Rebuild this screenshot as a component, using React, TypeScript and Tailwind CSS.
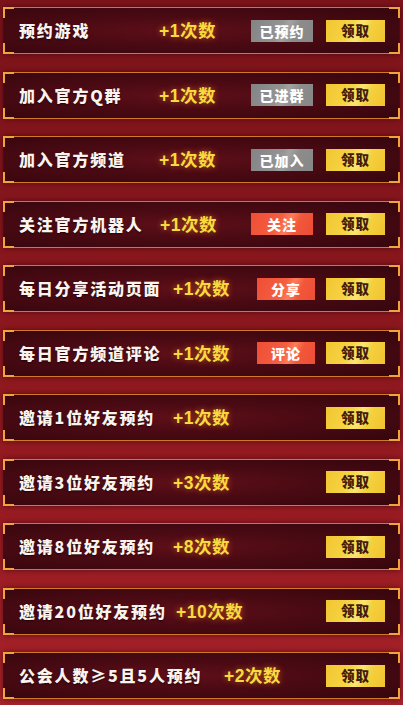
import React from "react";

type Row = {
  label: string;
  labelW: string;
  value: string;
  status?: { text: string; kind: "gray" | "red"; w: string };
};

const rows: Row[] = [
  { label: "预约游戏", labelW: "w-[140px]", value: "+1次数", status: { text: "已预约", kind: "gray", w: "w-[62px] mr-[13px]" } },
  { label: "加入官方Q群", labelW: "w-[140px]", value: "+1次数", status: { text: "已进群", kind: "gray", w: "w-[62px] mr-[13px]" } },
  { label: "加入官方频道", labelW: "w-[140px]", value: "+1次数", status: { text: "已加入", kind: "gray", w: "w-[62px] mr-[13px]" } },
  { label: "关注官方机器人", labelW: "w-[141px]", value: "+1次数", status: { text: "关注", kind: "red", w: "w-[62px] mr-[13px]" } },
  { label: "每日分享活动页面", labelW: "w-[154px]", value: "+1次数", status: { text: "分享", kind: "red", w: "w-[58px] mr-[11px]" } },
  { label: "每日官方频道评论", labelW: "w-[154px]", value: "+1次数", status: { text: "评论", kind: "red", w: "w-[58px] mr-[11px]" } },
  { label: "邀请1位好友预约", labelW: "w-[154px]", value: "+1次数" },
  { label: "邀请3位好友预约", labelW: "w-[154px]", value: "+3次数" },
  { label: "邀请8位好友预约", labelW: "w-[154px]", value: "+8次数" },
  { label: "邀请20位好友预约", labelW: "w-[157px]", value: "+10次数" },
  { label: "公会人数≥5且5人预约", labelW: "w-[205px]", value: "+2次数" },
];

function Corners() {
  return (
    <>
      <span className="absolute left-[-1px] top-[-1px] h-[11px] w-[11px] border-l-2 border-t-2 border-[#f0a53c]" />
      <span className="absolute right-[-1px] top-[-1px] h-[11px] w-[11px] border-r-2 border-t-2 border-[#f0a53c]" />
      <span className="absolute left-[-1px] bottom-[-1px] h-[11px] w-[11px] border-l-2 border-b-2 border-[#f0a53c]" />
      <span className="absolute right-[-1px] bottom-[-1px] h-[11px] w-[11px] border-r-2 border-b-2 border-[#f0a53c]" />
    </>
  );
}

function TaskRow({ row }: { row: Row }) {
  return (
    <div className="relative flex h-[47px] items-center border-y border-x border-y-[#d2782c] border-x-[#4a0c12] bg-[radial-gradient(ellipse_at_45%_50%,#5e0f19_0%,#4a0a13_45%,#36060d_100%)] pl-[15px] pr-[14px] shadow-[0_0_6px_rgba(40,0,5,0.6)]">
      <Corners />
      <div className="flex items-baseline">
        <div
          className={`${row.labelW} shrink-0 whitespace-nowrap text-[16px] font-black leading-[20px] tracking-[1.8px] text-[#fbf3ee] [text-shadow:0_1px_2px_rgba(0,0,0,0.6)]`}
        >
          {row.label}
        </div>
        <div className="whitespace-nowrap font-['Liberation_Sans','Noto_Sans_CJK_SC',sans-serif] text-[17.5px] font-bold leading-[20px] tracking-[0.5px] text-[#f8da3e] [text-shadow:0_0_6px_rgba(255,150,40,0.55)]">
          {row.value}
        </div>
      </div>
      <div className="ml-auto flex items-center">
        {row.status && (
          <div
            className={`${row.status.w} flex h-[22px] items-center justify-center text-[14px] font-black leading-none tracking-[1px] text-white ${
              row.status.kind === "gray"
                ? "bg-[linear-gradient(115deg,#838383_0%,#939393_45%,#a2a2a2_55%,#8c8c8c_70%,#878787_100%)]"
                : "bg-[linear-gradient(115deg,#ee4e35_0%,#f45f40_45%,#ff7c5a_58%,#f2573a_72%,#ec4d36_100%)]"
            }`}
          >
            {row.status.text}
          </div>
        )}
        <div className="flex h-[22px] w-[59px] items-center justify-center bg-[linear-gradient(115deg,#f2c531_0%,#f6d443_40%,#fbe572_55%,#f5d03d_70%,#f1c22f_100%)] text-[13.5px] font-black leading-none tracking-[1px] text-[#3f1c0c]">
          领取
        </div>
      </div>
    </div>
  );
}

export default function App() {
  return (
    <div className="h-[705px] w-[403px] overflow-hidden bg-[linear-gradient(180deg,#7d141b_0%,#8a171e_40%,#9a1c23_75%,#a8232b_100%)] px-[3px] pt-[7px] font-['Noto_Sans_CJK_SC','Noto_Sans',sans-serif]">
      <div className="flex flex-col gap-[17.5px]">
        {rows.map((r) => (
          <TaskRow key={r.label} row={r} />
        ))}
      </div>
    </div>
  );
}
